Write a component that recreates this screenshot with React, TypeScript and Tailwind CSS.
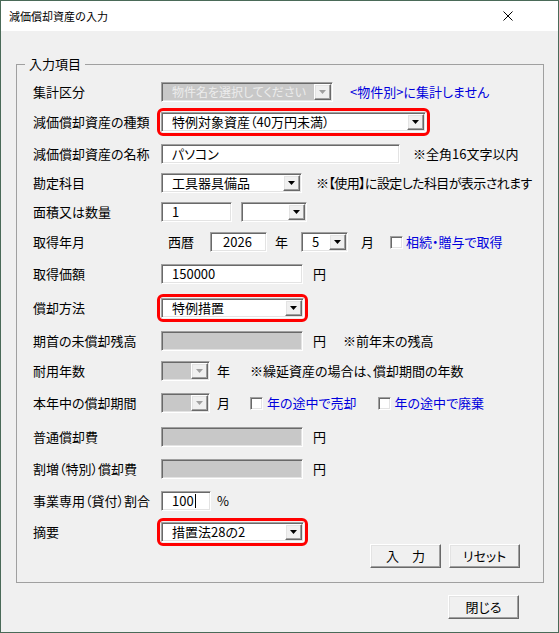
import * as React from "react";
import classNames from "clsx";

const sunken =
  "border border-t-[#a0a0a0] border-l-[#a0a0a0] border-b-white border-r-white shadow-[inset_1px_1px_0_#696969,inset_-1px_-1px_0_#e3e3e3]";
const raised =
  "border border-t-white border-l-white border-b-[#696969] border-r-[#696969] shadow-[inset_-1px_-1px_0_#a0a0a0,inset_1px_1px_0_#e3e3e3]";

const Arrow: React.FC<{ disabled?: boolean }> = ({ disabled }) => (
  <div
    className={classNames(
      "flex h-full w-[17px] shrink-0 items-center justify-center bg-[#f0f0f0]",
      raised
    )}
  >
    <svg width="7" height="4" viewBox="0 0 7 4">
      <path d="M0 0h7L3.5 4z" fill={disabled ? "#a0a0a0" : "#000"} />
    </svg>
  </div>
);

type FieldProps = {
  value?: React.ReactNode;
  width: string;
  disabled?: boolean;
  className?: string;
};

const Select: React.FC<FieldProps> = ({ value, width, disabled, className }) => (
  <div
    className={classNames(
      "flex h-[20px] shrink-0 p-px",
      sunken,
      disabled ? "bg-[#c8c8c8]" : "bg-white",
      width,
      className
    )}
  >
    <div
      className={classNames(
        "flex flex-1 items-center whitespace-nowrap pl-[9px]",
        disabled && "text-[12px] text-[#ececec]"
      )}
    >
      {value}
    </div>
    <Arrow disabled={disabled} />
  </div>
);

const Input: React.FC<FieldProps> = ({ value, width, disabled, className }) => (
  <div
    className={classNames(
      "flex h-[20px] shrink-0 items-center whitespace-nowrap pl-[10px]",
      sunken,
      disabled ? "bg-[#c8c8c8]" : "bg-white",
      width,
      className
    )}
  >
    {value}
  </div>
);

const Check: React.FC<{ className?: string }> = ({ className }) => (
  <div className={classNames("h-[13px] w-[13px] shrink-0 bg-white", sunken, className)} />
);

const Highlight: React.FC<{ children: React.ReactNode }> = ({ children }) => (
  <div className="-m-1 rounded-[6px] border-[3px] border-[#ff0000] p-px">
    {children}
  </div>
);

const Button: React.FC<{ children: React.ReactNode; className?: string }> = ({
  children,
  className,
}) => (
  <div
    className={classNames(
      "flex h-[24px] w-[71px] items-center justify-center bg-[#f0f0f0]",
      raised,
      className
    )}
  >
    {children}
  </div>
);

type RowProps = {
  label: string;
  className?: string;
  children?: React.ReactNode;
};

const Row: React.FC<RowProps> = ({ label, className, children }) => (
  <div className={classNames("flex h-[24px] items-center", className)}>
    <div className="w-[128px] shrink-0 whitespace-nowrap">{label}</div>
    {children}
  </div>
);

const Blue: React.FC<{ children: React.ReactNode; className?: string }> = ({
  children,
  className,
}) => (
  <span className={classNames("whitespace-nowrap text-[#0000dd]", className)}>
    {children}
  </span>
);

const App: React.FC = () => {
  return (
    <div
      className={classNames(
        "flex h-[633px] w-[559px] flex-col",
        "border border-[#4a6a58] bg-[#f0f0f0]",
        "font-['Noto_Sans_CJK_JP','Liberation_Sans',sans-serif] text-[13px] leading-[16px] text-black",
        "[font-feature-settings:'palt']"
      )}
    >
      {/* title bar */}
      <div className="flex h-[30px] shrink-0 items-center justify-between bg-white pl-[8px] pr-[45px]">
        <span className="text-[11px] [font-feature-settings:normal]">
          減価償却資産の入力
        </span>
        <svg width="10" height="10" viewBox="0 0 10 10">
          <path d="M0.5 0.5l9 9M9.5 0.5l-9 9" stroke="#000" strokeWidth="1" />
        </svg>
      </div>

      <div className="flex flex-1 flex-col px-[15px] pt-[25px]">
        <fieldset className="w-[528px] min-w-0 border border-[#a0a0a0] p-0">
          <legend className="ml-[8px] px-[4px] leading-[16px]">入力項目</legend>

          <div className="px-[16px] pb-[14px]">
            <Row label="集計区分" className="mt-[8px]">
              <Select width="w-[172px]" value="物件名を選択してください" disabled />
              <Blue className="ml-[17px]">{"<物件別>に集計しません"}</Blue>
            </Row>

            <Row label="減価償却資産の種類" className="mt-[6px]">
              <Highlight>
                <Select width="w-[265px]" value="特例対象資産（40万円未満）" />
              </Highlight>
            </Row>

            <Row label="減価償却資産の名称" className="mt-[8px]">
              <Input width="w-[239px]" value="パソコン" />
              <span className="ml-[13px] whitespace-nowrap">※全角16文字以内</span>
            </Row>

            <Row label="勘定科目" className="mt-[5px]">
              <Select width="w-[141px]" value="工具器具備品" />
              <span className="ml-[14px] whitespace-nowrap tracking-[-0.6px]">
                ※【使用】に設定した科目が表示されます
              </span>
            </Row>

            <Row label="面積又は数量" className="mt-[5px]">
              <Input width="w-[71px]" value="1" />
              <Select width="w-[66px]" className="ml-[9px]" />
            </Row>

            <Row label="取得年月" className="mt-[6px]">
              <span className="w-[49px] shrink-0 pl-[7px]">西暦</span>
              <Input width="w-[57px]" value="2026" className="!pl-[12px]" />
              <span className="ml-[8px]">年</span>
              <Select width="w-[47px]" value="5" className="ml-[13px]" />
              <span className="ml-[13px]">月</span>
              <Check className="ml-[16px]" />
              <Blue className="ml-[3px]">相続・贈与で取得</Blue>
            </Row>

            <Row label="取得価額" className="mt-[8px]">
              <Input width="w-[142px]" value="150000" />
              <span className="ml-[10px]">円</span>
            </Row>

            <Row label="償却方法" className="mt-[10px]">
              <Highlight>
                <Select width="w-[143px]" value="特例措置" />
              </Highlight>
            </Row>

            <Row label="期首の未償却残高" className="mt-[9px]">
              <Input width="w-[142px]" disabled />
              <span className="ml-[10px]">円</span>
              <span className="ml-[17px] whitespace-nowrap">※前年末の残高</span>
            </Row>

            <Row label="耐用年数" className="mt-[6px]">
              <Select width="w-[49px]" disabled />
              <span className="ml-[7px]">年</span>
              <span className="ml-[20px] whitespace-nowrap">
                ※繰延資産の場合は、償却期間の年数
              </span>
            </Row>

            <Row label="本年中の償却期間" className="mt-[8px]">
              <Select width="w-[49px]" disabled />
              <span className="ml-[7px]">月</span>
              <Check className="ml-[20px]" />
              <Blue className="ml-[4px]">年の途中で売却</Blue>
              <Check className="ml-[21px]" />
              <Blue className="ml-[4px]">年の途中で廃棄</Blue>
            </Row>

            <Row label="普通償却費" className="mt-[10px]">
              <Input width="w-[142px]" disabled />
              <span className="ml-[10px]">円</span>
            </Row>

            <Row label="割増（特別）償却費" className="mt-[8px]">
              <Input width="w-[142px]" disabled />
              <span className="ml-[10px]">円</span>
            </Row>

            <Row label="事業専用（貸付）割合" className="mt-[8px]">
              <Input
                width="w-[50px]"
                value={
                  <>
                    100
                    <span className="ml-px inline-block h-[14px] w-px bg-black" />
                  </>
                }
              />
              <span className="ml-[6px]">%</span>
            </Row>

            <Row label="摘要" className="mt-[7px]">
              <Highlight>
                <Select width="w-[143px]" value="措置法28の2" />
              </Highlight>
            </Row>

            <div className="flex justify-end gap-[8px] pr-[7px]">
              <Button>入　力</Button>
              <Button>リセット</Button>
            </div>
          </div>
        </fieldset>

        <div className="mr-[24px] mt-[12px] flex justify-end">
          <Button>閉じる</Button>
        </div>
      </div>
    </div>
  );
};

export default App;
